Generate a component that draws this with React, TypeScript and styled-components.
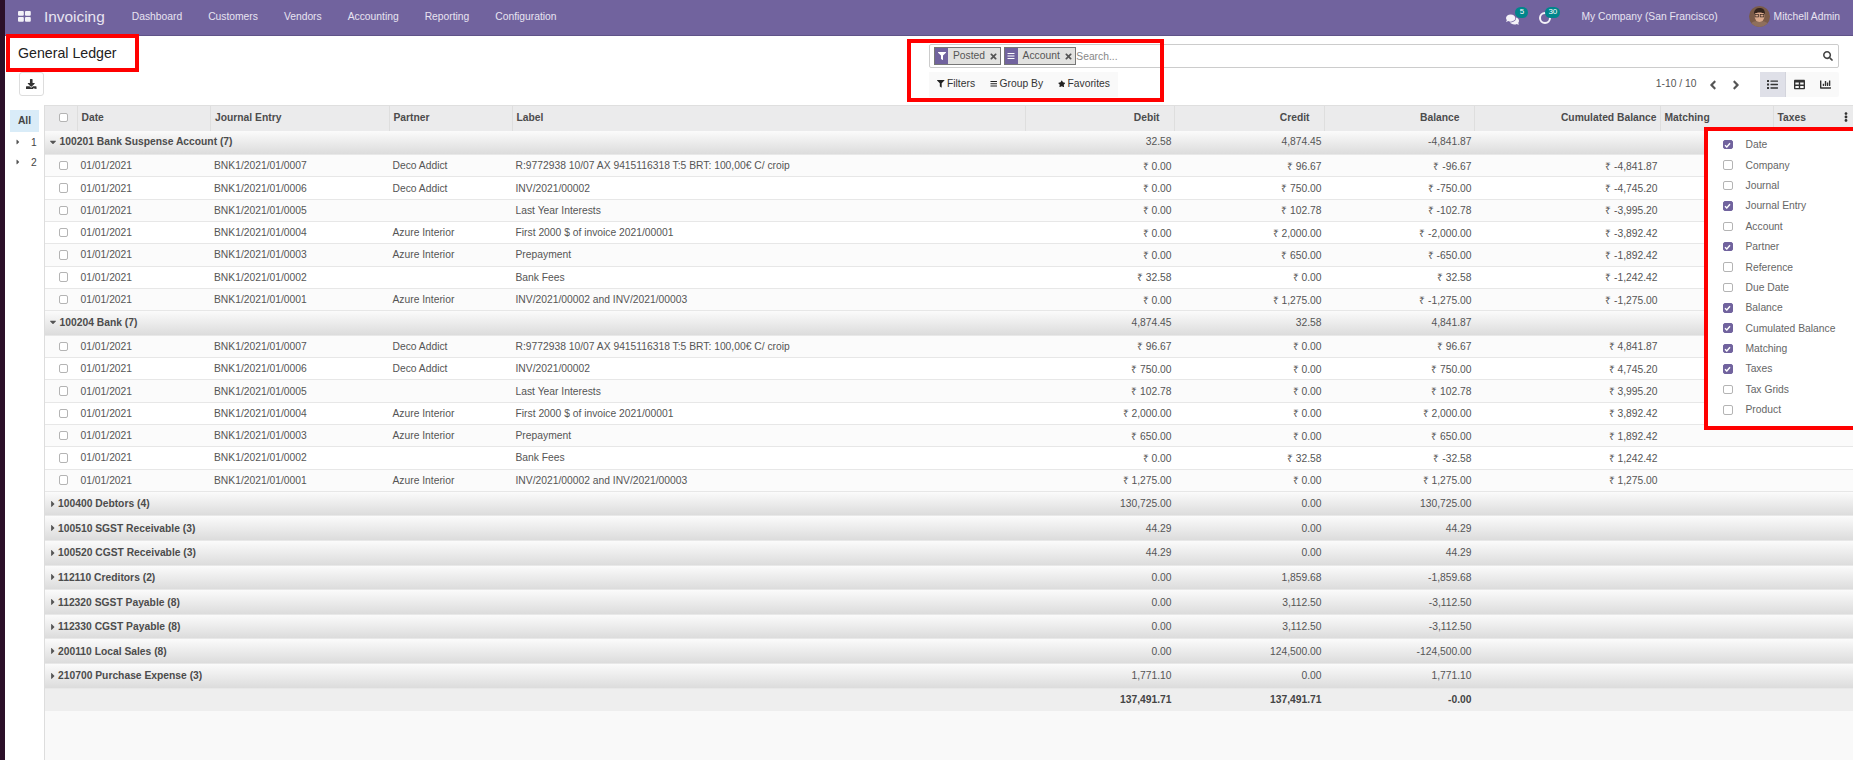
import styled, { createGlobalStyle } from "styled-components";
import {
  FaAngleLeft, FaAngleRight, FaBars, FaCaretDown, FaCaretRight, FaChartBar, FaComments, FaDownload,
  FaEllipsisV, FaFilter, FaList, FaSearch, FaStar, FaTable, FaTimes,
} from "react-icons/fa";

const GlobalStyle = createGlobalStyle`
  html, body {
    margin: 0;
    height: 760px;
    overflow: hidden;
    background: #fff;
    font-family: "Liberation Sans", Arial, sans-serif;
    font-size: 10.3px;
    color: #555;
  }
  * { box-sizing: border-box; }
`;

const COLUMNS = "32.5px 133.5px 178.5px 123px 513.5px 148.5px 150px 150px 186px 113px 80px";

const Page = styled.div`
  position: relative;
  display: flex;
  width: 1853px;
  height: 760px;
  overflow: hidden;
`;
const DesktopEdge = styled.div`
  width: 5px;
  flex: none;
  background: #2c1029;
`;
const Main = styled.div`
  flex: 1;
  min-width: 0;
  display: flex;
  flex-direction: column;
`;

const Navbar = styled.header`
  height: 36px;
  flex: none;
  display: flex;
  align-items: center;
  background: #71639e;
  border-bottom: 1px solid #5f5388;
  color: #e8e4f1;
  padding: 0 13px 2px 13px;
`;
const AppsIcon = styled.svg`
  width: 13px;
  height: 11px;
  margin-right: 13px;
  fill: #f2f0f7;
`;
const Brand = styled.span`
  font-size: 15.4px;
  margin-right: 27px;
`;
const Menu = styled.nav`
  display: flex;
  gap: 26px;
`;
const NavRight = styled.div`
  margin-left: auto;
  display: flex;
  align-items: center;
`;
const Systray = styled.div`
  position: relative;
  width: 33px;
  height: 20px;
  display: flex;
  align-items: center;
  svg { display: block; margin-top: 5px; }
`;
const Badge = styled.span<{ $left: number }>`
  position: absolute;
  top: 0;
  left: ${(p) => p.$left}px;
  height: 11px;
  min-width: 13px;
  padding: 0 3px;
  border-radius: 6px;
  background: #00868b;
  color: #fff;
  font-size: 8px;
  line-height: 10px;
  text-align: center;
`;
const ClockRing = styled.span`
  width: 12px;
  height: 12px;
  margin-top: 3px;
  border: 2px solid #f4f2f8;
  border-radius: 50%;
`;
const Company = styled.span`
  margin-left: 9px;
  margin-right: 31px;
`;
const Avatar = styled.svg`
  width: 21px;
  height: 21px;
  margin-right: 4px;
  border-radius: 50%;
`;

const ControlPanel = styled.section`
  height: 69px;
  flex: none;
  display: grid;
  grid-template-columns: 924px 1fr;
  grid-template-rows: 28px 25px;
  padding: 8px 14px 0 0;
`;
const Title = styled.h1`
  margin: 0 0 0 13px;
  font-size: 14.2px;
  font-weight: 400;
  line-height: 18px;
  color: #222;
`;
const SearchBox = styled.div`
  height: 24px;
  display: flex;
  align-items: center;
  padding: 0 4px;
  border: 1px solid #ccc;
  border-radius: 2px;
`;
const Facet = styled.span`
  height: 18px;
  display: flex;
  align-items: center;
  margin-right: 2.5px;
  border: 1px solid #777;
  background: #e2e2e0;
  color: #555;
`;
const FacetIcon = styled.span`
  width: 13px;
  height: 16px;
  display: flex;
  align-items: center;
  justify-content: center;
  background: #71639e;
  color: #fff;
  font-size: 8px;
`;
const FacetLabel = styled.span`
  padding: 0 4px 2px 5px;
`;
const FacetClose = styled(FaTimes)`
  margin-right: 2px;
  font-size: 9px;
  color: #555;
`;
const SearchHint = styled.span`
  margin-left: -2px;
  color: #888;
  flex: 1;
`;
const SearchIcon = styled(FaSearch)`
  font-size: 10px;
  color: #444;
  margin-right: 1px;
`;
const BarRow = styled.div`
  display: flex;
  align-items: center;
  justify-content: space-between;
`;
const SearchButtons = styled.div`
  height: 25px;
  display: flex;
  align-items: center;
  gap: 14.5px;
  padding: 0 8px 2px;
  background: #f9f9f9;
  color: #333;
`;
const ToolButton = styled.span`
  display: flex;
  align-items: center;
  gap: 2.5px;
  svg { font-size: 7.5px; color: #222; margin-top: 1px; }
`;
const DownloadSlot = styled.div`
  padding-left: 14px;
`;
const DownloadButton = styled.span`
  width: 25px;
  height: 24px;
  display: flex;
  align-items: center;
  justify-content: center;
  border: 1px solid #ddd;
  border-radius: 3px;
  color: #333;
  font-size: 10.5px;
`;
const RightTools = styled.div`
  display: flex;
  align-items: center;
`;
const Pager = styled.span`
  margin-right: 5px;
  padding-bottom: 3px;
`;
const PagerArrow = styled.span`
  width: 23px;
  display: flex;
  justify-content: center;
  color: #555;
  font-size: 14px;
`;
const ViewSwitch = styled.div`
  display: flex;
  margin-left: 12px;
  height: 25px;
  background: #f9f9f9;
  border-radius: 2px;
`;
const ViewButton = styled.span<{ $active?: boolean }>`
  width: 26.5px;
  display: flex;
  align-items: center;
  justify-content: center;
  font-size: 11px;
  color: #333;
  background: ${(p) => (p.$active ? "#dfe0e8" : "transparent")};
  border-right: ${(p) => (p.$active ? "1px solid #d3d4dc" : "0")};
`;

const Content = styled.main`
  flex: 1;
  min-height: 0;
  display: flex;
`;
const Sidebar = styled.aside`
  width: 40px;
  flex: none;
  padding: 5px 0 0 5px;
  border-right: 1px solid #ddd;
`;
const SidebarAll = styled.div`
  width: 29px;
  height: 22px;
  line-height: 22px;
  text-align: center;
  font-weight: 700;
  color: #444;
  background: #d9ecf8;
`;
const SidebarItem = styled.div`
  height: 20px;
  display: flex;
  align-items: center;
  padding-left: 4px;
  gap: 9px;
  color: #444;
  svg { font-size: 8px; color: #555; }
`;

const Table = styled.div`
  flex: 1;
  min-width: 0;
  background: #f9f9f9;
  border-top: 1px solid #dfdfdf;
`;
const GridRow = styled.div`
  display: grid;
  grid-template-columns: ${COLUMNS};
  align-items: center;
`;
const HeaderRow = styled(GridRow)`
  height: 24.5px;
  align-items: stretch;
  background: #ebebec;
  font-weight: 700;
  color: #4c4c4c;
`;
const HeadCell = styled.div<{ $right?: boolean; $pad?: number }>`
  display: flex;
  align-items: center;
  padding: 0 ${(p) => p.$pad ?? 3}px 2px 4px;
  justify-content: ${(p) => (p.$right ? "flex-end" : "flex-start")};
  border-right: 1px solid #dedede;
`;
const LastHeadCell = styled(HeadCell)`
  border-right: 0;
  justify-content: space-between;
  padding-right: 3px;
  svg { font-size: 10px; color: #333; }
`;
const CheckCell = styled.div`
  display: flex;
  align-items: center;
  padding-left: 13.5px;
`;
const CheckHeadCell = styled(CheckCell)`
  border-right: 1px solid #dedede;
  padding-bottom: 2px;
`;
const Check = styled.span<{ $on?: boolean }>`
  width: 9.5px;
  height: 9.5px;
  flex: none;
  display: flex;
  align-items: center;
  justify-content: center;
  border-radius: 2px;
  border: 1px solid ${(p) => (p.$on ? "#71639e" : "#b4b4b4")};
  background: ${(p) => (p.$on ? "#71639e" : "#fff")};
`;
const GroupRow = styled(GridRow)<{ $open?: boolean }>`
  height: 24.6px;
  padding-bottom: ${(p) => (p.$open ? 1 : 0)}px;
  background: linear-gradient(#fbfbfb, #dcdcdc);
  border-bottom: 1px solid #e8e8e8;
`;
const GroupName = styled.div<{ $open?: boolean }>`
  grid-column: 1 / 6;
  display: flex;
  align-items: center;
  gap: ${(p) => (p.$open ? 1.5 : 0)}px;
  padding-left: 3px;
  font-weight: 700;
  color: #4c4c4c;
  svg { font-size: 10px; color: #555; }
`;
const DataRow = styled(GridRow)<{ $odd: boolean }>`
  height: 22.3px;
  background: ${(p) => (p.$odd ? "#fbfbfb" : "#fff")};
  border-bottom: 1px solid #e7e7e7;
`;
const Cell = styled.div`
  padding: 0 3px;
  white-space: nowrap;
`;
const Amount = styled(Cell)`
  text-align: right;
`;
const FooterRow = styled(GridRow)`
  height: 22.4px;
  background: #eeeeee;
  font-weight: 700;
  color: #444;
`;
const FooterLead = styled.div`
  grid-column: 1 / 6;
`;

const Mark = styled.div`
  position: absolute;
  border: 4px solid #f00;
  pointer-events: none;
`;
const TitleMark = styled(Mark)`
  left: 6px;
  top: 34px;
  width: 133px;
  height: 38px;
`;
const SearchMark = styled(Mark)`
  left: 907px;
  top: 39px;
  width: 257px;
  height: 63px;
`;
const ColumnMenu = styled.div`
  position: absolute;
  left: 1704px;
  top: 127px;
  width: 153px;
  height: 303px;
  padding-top: 3.5px;
  background: #fff;
  border: 4px solid #f00;
`;
const MenuItem = styled.div`
  height: 20.4px;
  display: flex;
  align-items: center;
  gap: 13px;
  padding-left: 15px;
  color: #666;
`;

type Line = { date: string; entry: string; partner: string; label: string; debit: string; credit: string; balance: string; cumul: string };

const entryLabels = [
  ["BNK1/2021/01/0007", "Deco Addict", "R:9772938 10/07 AX 9415116318 T:5 BRT: 100,00€ C/ croip"],
  ["BNK1/2021/01/0006", "Deco Addict", "INV/2021/00002"],
  ["BNK1/2021/01/0005", "", "Last Year Interests"],
  ["BNK1/2021/01/0004", "Azure Interior", "First 2000 $ of invoice 2021/00001"],
  ["BNK1/2021/01/0003", "Azure Interior", "Prepayment"],
  ["BNK1/2021/01/0002", "", "Bank Fees"],
  ["BNK1/2021/01/0001", "Azure Interior", "INV/2021/00002 and INV/2021/00003"],
];

const makeLines = (values: string[][]): Line[] =>
  values.map((v, i) => ({
    date: "01/01/2021",
    entry: entryLabels[i][0],
    partner: entryLabels[i][1],
    label: entryLabels[i][2],
    debit: v[0],
    credit: v[1],
    balance: v[2],
    cumul: v[3],
  }));

const suspenseLines = makeLines([
  ["₹ 0.00", "₹ 96.67", "₹ -96.67", "₹ -4,841.87"],
  ["₹ 0.00", "₹ 750.00", "₹ -750.00", "₹ -4,745.20"],
  ["₹ 0.00", "₹ 102.78", "₹ -102.78", "₹ -3,995.20"],
  ["₹ 0.00", "₹ 2,000.00", "₹ -2,000.00", "₹ -3,892.42"],
  ["₹ 0.00", "₹ 650.00", "₹ -650.00", "₹ -1,892.42"],
  ["₹ 32.58", "₹ 0.00", "₹ 32.58", "₹ -1,242.42"],
  ["₹ 0.00", "₹ 1,275.00", "₹ -1,275.00", "₹ -1,275.00"],
]);
const bankLines = makeLines([
  ["₹ 96.67", "₹ 0.00", "₹ 96.67", "₹ 4,841.87"],
  ["₹ 750.00", "₹ 0.00", "₹ 750.00", "₹ 4,745.20"],
  ["₹ 102.78", "₹ 0.00", "₹ 102.78", "₹ 3,995.20"],
  ["₹ 2,000.00", "₹ 0.00", "₹ 2,000.00", "₹ 3,892.42"],
  ["₹ 650.00", "₹ 0.00", "₹ 650.00", "₹ 1,892.42"],
  ["₹ 0.00", "₹ 32.58", "₹ -32.58", "₹ 1,242.42"],
  ["₹ 1,275.00", "₹ 0.00", "₹ 1,275.00", "₹ 1,275.00"],
]);

const closedGroups = [
  ["100400 Debtors (4)", "130,725.00", "0.00", "130,725.00"],
  ["100510 SGST Receivable (3)", "44.29", "0.00", "44.29"],
  ["100520 CGST Receivable (3)", "44.29", "0.00", "44.29"],
  ["112110 Creditors (2)", "0.00", "1,859.68", "-1,859.68"],
  ["112320 SGST Payable (8)", "0.00", "3,112.50", "-3,112.50"],
  ["112330 CGST Payable (8)", "0.00", "3,112.50", "-3,112.50"],
  ["200110 Local Sales (8)", "0.00", "124,500.00", "-124,500.00"],
  ["210700 Purchase Expense (3)", "1,771.10", "0.00", "1,771.10"],
];

const columnOptions: [string, boolean][] = [
  ["Date", true], ["Company", false], ["Journal", false], ["Journal Entry", true], ["Account", false],
  ["Partner", true], ["Reference", false], ["Due Date", false], ["Balance", true], ["Cumulated Balance", true],
  ["Matching", true], ["Taxes", true], ["Tax Grids", false], ["Product", false],
];

const menus = ["Dashboard", "Customers", "Vendors", "Accounting", "Reporting", "Configuration"];

function Tick() {
  return (
    <svg width="7" height="6" viewBox="0 0 7 6">
      <path d="M1 3.2 2.8 5 6 1.2" fill="none" stroke="#fff" strokeWidth="1.4" />
    </svg>
  );
}

function Group({ name, debit, credit, balance, open }: { name: string; debit: string; credit: string; balance: string; open?: boolean }) {
  return (
    <GroupRow $open={open}>
      <GroupName $open={open}>
        {open ? <FaCaretDown /> : <FaCaretRight />}
        {name}
      </GroupName>
      <Amount>{debit}</Amount>
      <Amount>{credit}</Amount>
      <Amount>{balance}</Amount>
    </GroupRow>
  );
}

function Lines({ lines }: { lines: Line[] }) {
  return (
    <>
      {lines.map((line, i) => (
        <DataRow key={line.entry} $odd={i % 2 === 0}>
          <CheckCell><Check /></CheckCell>
          <Cell>{line.date}</Cell>
          <Cell>{line.entry}</Cell>
          <Cell>{line.partner}</Cell>
          <Cell>{line.label}</Cell>
          <Amount>{line.debit}</Amount>
          <Amount>{line.credit}</Amount>
          <Amount>{line.balance}</Amount>
          <Amount>{line.cumul}</Amount>
        </DataRow>
      ))}
    </>
  );
}

export default function App() {
  return (
    <Page>
      <GlobalStyle />
      <DesktopEdge />
      <Main>
        <Navbar>
          <AppsIcon viewBox="0 0 13 11">
            <rect x="0" y="0" width="5.8" height="4.8" rx="1" />
            <rect x="7" y="0" width="5.8" height="4.8" rx="1" />
            <rect x="0" y="6" width="5.8" height="4.8" rx="1" />
            <rect x="7" y="6" width="5.8" height="4.8" rx="1" />
          </AppsIcon>
          <Brand>Invoicing</Brand>
          <Menu>
            {menus.map((m) => <span key={m}>{m}</span>)}
          </Menu>
          <NavRight>
            <Systray>
              <FaComments size={13} color="#f4f2f8" />
              <Badge $left={9}>5</Badge>
            </Systray>
            <Systray>
              <ClockRing />
              <Badge $left={6}>30</Badge>
            </Systray>
            <Company>My Company (San Francisco)</Company>
            <Avatar viewBox="0 0 21 21">
              <rect width="21" height="21" fill="#7a5b48" />
              <path d="M0 21c1-5 5-6 10-6s10 1 11 6z" fill="#8f6f5c" />
              <ellipse cx="10.5" cy="10" rx="5" ry="6" fill="#d9a98c" />
              <path d="M5 8c0-5 3-6 6-6s5 2 5 6c-3-2-8-2-11 0z" fill="#33241d" />
              <rect x="6" y="8.5" width="3.6" height="2.4" fill="none" stroke="#33241d" strokeWidth=".7" />
              <rect x="11.2" y="8.5" width="3.6" height="2.4" fill="none" stroke="#33241d" strokeWidth=".7" />
            </Avatar>
            <span>Mitchell Admin</span>
          </NavRight>
        </Navbar>

        <ControlPanel>
          <Title>General Ledger</Title>
          <SearchBox>
            <Facet>
              <FacetIcon><FaFilter /></FacetIcon>
              <FacetLabel>Posted</FacetLabel>
              <FacetClose />
            </Facet>
            <Facet>
              <FacetIcon><FaBars /></FacetIcon>
              <FacetLabel>Account</FacetLabel>
              <FacetClose />
            </Facet>
            <SearchHint>Search...</SearchHint>
            <SearchIcon />
          </SearchBox>
          <DownloadSlot>
            <DownloadButton><FaDownload /></DownloadButton>
          </DownloadSlot>
          <BarRow>
            <SearchButtons>
              <ToolButton><FaFilter />Filters</ToolButton>
              <ToolButton><FaBars />Group By</ToolButton>
              <ToolButton><FaStar />Favorites</ToolButton>
            </SearchButtons>
            <RightTools>
              <Pager>1-10 / 10</Pager>
              <PagerArrow><FaAngleLeft /></PagerArrow>
              <PagerArrow><FaAngleRight /></PagerArrow>
              <ViewSwitch>
                <ViewButton $active><FaList /></ViewButton>
                <ViewButton><FaTable /></ViewButton>
                <ViewButton><FaChartBar /></ViewButton>
              </ViewSwitch>
            </RightTools>
          </BarRow>
        </ControlPanel>

        <Content>
          <Sidebar>
            <SidebarAll>All</SidebarAll>
            <SidebarItem><FaCaretRight />1</SidebarItem>
            <SidebarItem><FaCaretRight />2</SidebarItem>
          </Sidebar>
          <Table>
            <HeaderRow>
              <CheckHeadCell><Check /></CheckHeadCell>
              <HeadCell>Date</HeadCell>
              <HeadCell>Journal Entry</HeadCell>
              <HeadCell>Partner</HeadCell>
              <HeadCell>Label</HeadCell>
              <HeadCell $right $pad={14}>Debit</HeadCell>
              <HeadCell $right $pad={14}>Credit</HeadCell>
              <HeadCell $right $pad={14}>Balance</HeadCell>
              <HeadCell $right>Cumulated Balance</HeadCell>
              <HeadCell>Matching</HeadCell>
              <LastHeadCell>Taxes<FaEllipsisV /></LastHeadCell>
            </HeaderRow>
            <Group open name="100201 Bank Suspense Account (7)" debit="32.58" credit="4,874.45" balance="-4,841.87" />
            <Lines lines={suspenseLines} />
            <Group open name="100204 Bank (7)" debit="4,874.45" credit="32.58" balance="4,841.87" />
            <Lines lines={bankLines} />
            {closedGroups.map((g) => (
              <Group key={g[0]} name={g[0]} debit={g[1]} credit={g[2]} balance={g[3]} />
            ))}
            <FooterRow>
              <FooterLead />
              <Amount>137,491.71</Amount>
              <Amount>137,491.71</Amount>
              <Amount>-0.00</Amount>
            </FooterRow>
          </Table>
        </Content>
      </Main>

      <TitleMark />
      <SearchMark />
      <ColumnMenu>
        {columnOptions.map(([label, on]) => (
          <MenuItem key={label}>
            <Check $on={on}>{on && <Tick />}</Check>
            {label}
          </MenuItem>
        ))}
      </ColumnMenu>
    </Page>
  );
}
